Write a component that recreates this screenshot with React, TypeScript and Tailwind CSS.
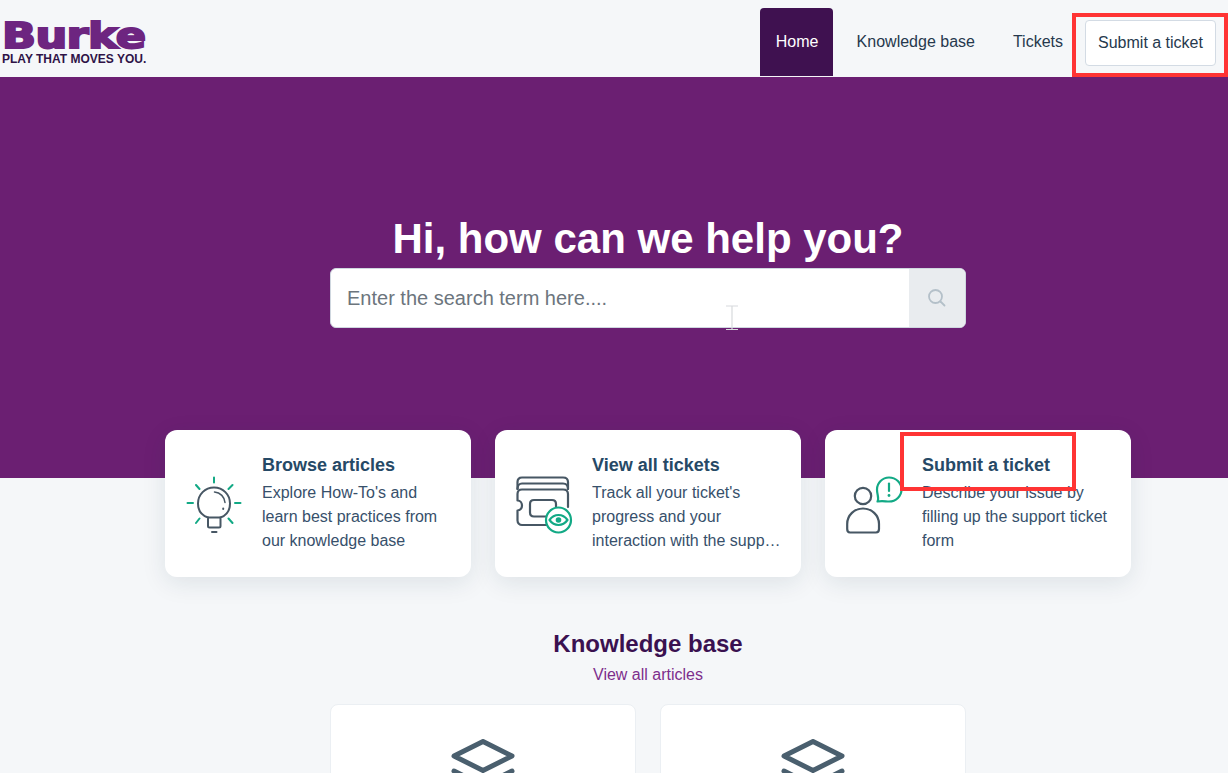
import React from 'react';

const Bulb = () => (
  <svg width="56" height="60" viewBox="0 0 56 60" fill="none" strokeWidth="2" strokeLinecap="round">
    <g stroke="#12a985">
      <path d="M28 1.500V6.500M1.500 27H7M49 27H54.500M10 9L13.500 13M46.500 9L42.500 13M10 47L13.500 42.500M46.500 47L42.500 42.500" />
    </g>
    <g stroke="#475764">
      <path d="M22 41.500C14.500 39 12 33 12 27.500C12 18.500 19 11.500 28 11.500C37 11.500 44 18.500 44 27.500C44 33 41.500 39 34.500 41.500V50C34.500 51 34 51.500 33 51.500H23.500C22.500 51.500 22 51 22 50V41.500Z" />
      <path d="M22 41.500H34.500M26 56H30.500" />
      <path d="M28.500 16C34.500 16.500 38.500 21 39 26.500" strokeWidth="1.500" />
      <path d="M37.200 32.500V33" />
    </g>
  </svg>
);

const Ticket = () => (
  <svg width="58" height="60" viewBox="0 0 58 60" fill="none" strokeWidth="2.200" strokeLinecap="round" strokeLinejoin="round">
    <g stroke="#475764">
      <path d="M1.500 13V6C1.500 3 3.500 1.500 6 1.500H47C50 1.500 52 3 52 6V13" />
      <path d="M1.500 13C1.500 9.500 3.500 7.500 6 7.500H47C50 7.500 52 9.500 52 13" />
      <path d="M36 49H6C3.500 49 1.500 47 1.500 44.500V34.500C4.500 34.500 6 32 6 29.500C6 27 4.500 24.500 1.500 24.500V18C1.500 15 3.500 13.500 6 13.500H47C50 13.500 52 15 52 18V31" />
      <path d="M33 40.500H18C15.500 40.500 14 39 14 36.500V28C14 25.500 15.500 24 18 24H36C38.500 24 40 25.500 40 28V31" />
    </g>
    <circle cx="42.500" cy="44" r="12.500" fill="#ffffff" stroke="#12a985" />
    <path d="M33.500 44C36 40.500 39 39 42.500 39C46 39 49 40.500 51.500 44C49 47.500 46 49 42.500 49C39 49 36 47.500 33.500 44Z" stroke="#12a985" />
    <circle cx="42.500" cy="44" r="2.800" fill="#12a985" />
  </svg>
);

const Person = () => (
  <svg width="58" height="60" viewBox="0 0 58 60" fill="none" strokeWidth="2.200" strokeLinecap="round" strokeLinejoin="round">
    <g stroke="#475764">
      <circle cx="17" cy="20" r="8.200" />
      <path d="M1.200 53V48C1.200 39 8.500 32.500 17 32.500C25.500 32.500 33 39 33 48V53C33 55.500 32 56.500 30 56.500H4C2 56.500 1.200 55.500 1.200 53Z" />
    </g>
    <path d="M43 1.500C50 1.500 55.500 7 55.500 13.500C55.500 20 50 25.500 43 25.500C39.500 25.500 36.500 24.500 31.500 25.500C33.500 22.500 31 19 31 13.500C31 7 36.500 1.500 43 1.500Z" stroke="#12a985" />
    <path d="M43 7.500V15" stroke="#12a985" />
    <path d="M43 19.300V19.500" stroke="#12a985" strokeWidth="2.800" />
  </svg>
);

const Layers = () => (
  <svg width="64" height="70" viewBox="0 0 64 70" fill="none" stroke="#4a5f6e" strokeWidth="5" strokeLinecap="round" strokeLinejoin="round">
    <path d="M32 2.500L61 17L32 31.500L3 17Z" />
    <path d="M3 32L32 46.500L61 32" />
  </svg>
);

const cards = [
  { title: 'Browse articles', lines: ["Explore How-To's and", 'learn best practices from', 'our knowledge base'], icon: <Bulb /> },
  { title: 'View all tickets', lines: ["Track all your ticket's", 'progress and your', 'interaction with the support team'], icon: <Ticket /> },
  { title: 'Submit a ticket', lines: ['Describe your issue by', 'filling up the support ticket', 'form'], icon: <Person /> },
];

export default function App() {
  return (
    <div className="relative h-[773px] overflow-hidden bg-[#f5f7f9] font-['Liberation_Sans',Arial,sans-serif]">
      <header className="flex h-[77px] items-start justify-between pr-3">
        <a className="ml-[2px] mt-[20px] block w-[146px] text-[#6d2580]">
          <div className="h-[32px] origin-left scale-x-[1.24] font-['DejaVu_Sans',sans-serif] text-[36px] leading-[32px] font-bold tracking-[-0.5px] [-webkit-text-stroke:2px_#6d2580]">Burke</div>
          <div className="whitespace-nowrap text-[12px] leading-[14px] font-bold text-[#2f1347]">PLAY THAT MOVES YOU.</div>
        </a>
        <nav className="flex items-start text-[16px] text-[#26394d]">
          <a className="mt-[8px] flex h-[68px] w-[73px] items-start justify-center rounded-t-[4px] bg-[#3f1150] pl-[2px] pt-[24px] leading-[19px] text-white">Home</a>
          <a className="ml-[24px] mt-[32px] leading-[19px]">Knowledge base</a>
          <a className="ml-[38px] mt-[32px] leading-[19px]">Tickets</a>
          <a className="ml-[22px] mt-[20px] flex h-[46px] w-[131px] items-center justify-center rounded-[4px] border border-[#d3dbe4] bg-white">Submit a ticket</a>
        </nav>
      </header>

      <section className="h-[401px] bg-[#6b1f72] pt-[136px]">
        <div className="ml-[330px] w-[636px]">
          <h1 className="text-center text-[42px] leading-[52px] font-bold text-white">Hi, how can we help you?</h1>
          <div className="mt-[3px] flex h-[60px] overflow-hidden rounded-[6px] border border-[#cfd7df] bg-white">
            <div className="flex flex-1 items-center pl-[16px] text-[20px] text-[#6c757d]">Enter the search term here....</div>
            <div className="flex w-[56px] items-center justify-center bg-[#e9ecef]">
              <svg width="20" height="20" viewBox="0 0 20 20" fill="none" stroke="#b4c0c9" strokeWidth="1.800" strokeLinecap="round">
                <circle cx="8.500" cy="8.500" r="6.500" />
                <path d="M13.500 13.500L17.500 17.500" />
              </svg>
            </div>
          </div>
        </div>
      </section>

      <div className="relative z-10 ml-[165px] -mt-[48px] grid w-[966px] grid-cols-3 gap-6">
        {cards.map((c) => (
          <div key={c.title} className="flex h-[147px] items-center rounded-[12px] bg-white pl-[21px] pr-[20px] shadow-[0_6px_24px_rgba(24,50,71,0.1)]">
            <div className="mt-[4px] w-[76px] shrink-0">{c.icon}</div>
            <div className="min-w-0 flex-1">
              <div className="text-[18px] leading-[22px] font-bold text-[#264966]">{c.title}</div>
              <div className="mt-[5px] text-[16px] leading-[24px] text-[#37506b]">
                {c.lines.map((l) => (
                  <div key={l} className="truncate">{l}</div>
                ))}
              </div>
            </div>
          </div>
        ))}
      </div>

      <div className="ml-[330px] w-[636px] pt-[53px]">
        <h2 className="text-center text-[24px] leading-[28px] font-bold text-[#3a1150]">Knowledge base</h2>
        <div className="mt-[5px] text-center text-[16px] leading-[24px] text-[#7d2e8c]">View all articles</div>
        <div className="mt-[17px] grid grid-cols-2 gap-6">
          {[0, 1].map((i) => (
            <div key={i} className="flex h-[200px] justify-center rounded-[8px] border border-[#ebeff3] bg-white pt-[34px]">
              <Layers />
            </div>
          ))}
        </div>
      </div>

      {/* red annotation boxes and the mouse cursor lie over the page */}
      <div className="absolute left-[1072px] top-[13px] z-20 h-[64px] w-[156px] border-[4.5px] border-[#ff3434]" />
      <div className="absolute left-[900px] top-[432px] z-20 h-[59px] w-[176px] border-[4.5px] border-[#ff3434]" />
      <svg className="absolute left-[725px] top-[305px] z-20" width="14" height="26" viewBox="0 0 14 26" fill="none" stroke="#d8dadd" strokeWidth="1.200">
        <path d="M1 1H13M7 1V24M1 24.500H13" />
      </svg>
    </div>
  );
}
